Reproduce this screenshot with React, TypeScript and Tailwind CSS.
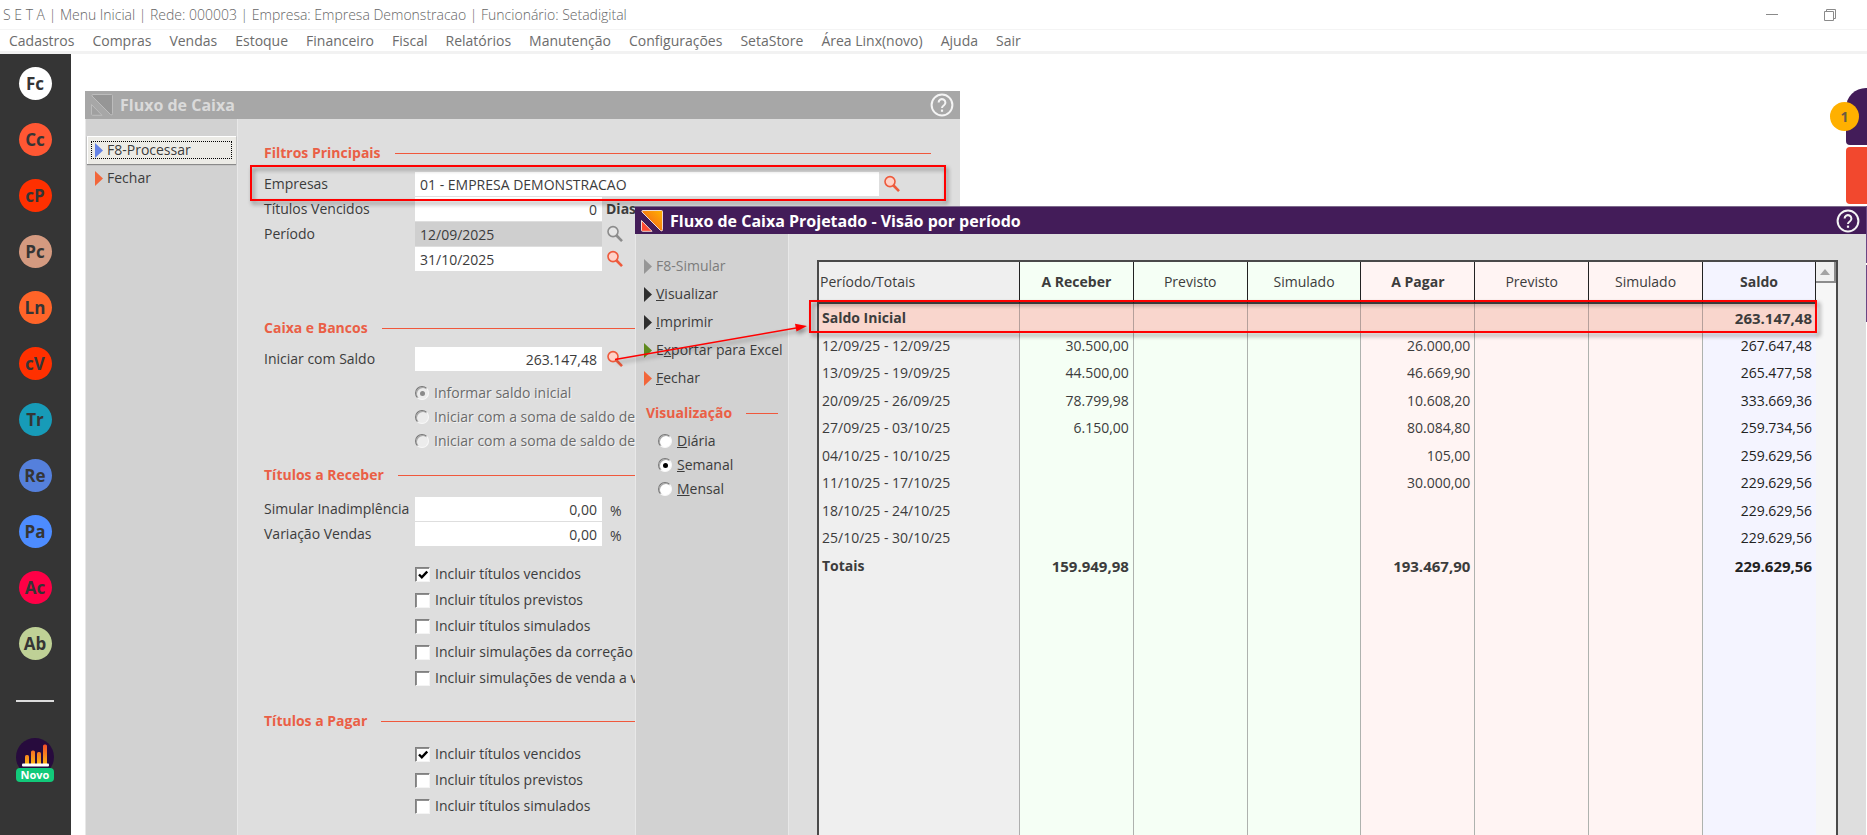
import { useState } from "react";
import type { ReactNode } from "react";

const MENU = [
  "Cadastros",
  "Compras",
  "Vendas",
  "Estoque",
  "Financeiro",
  "Fiscal",
  "Relatórios",
  "Manutenção",
  "Configurações",
  "SetaStore",
  "Área Linx(novo)",
  "Ajuda",
  "Sair",
];

const SHORTCUTS = [
  { label: "Fc", color: "bg-white" },
  { label: "Cc", color: "bg-[#ff5733]" },
  { label: "cP", color: "bg-[#ff3000]" },
  { label: "Pc", color: "bg-[#d49a80]" },
  { label: "Ln", color: "bg-[#ff6428]" },
  { label: "cV", color: "bg-[#ff3000]" },
  { label: "Tr", color: "bg-[#179bb8]" },
  { label: "Re", color: "bg-[#5580dc]" },
  { label: "Pa", color: "bg-[#4d8cff]" },
  { label: "Ac", color: "bg-[#ff0046]" },
  { label: "Ab", color: "bg-[#bfd196]" },
];

type Row = { period: string; receber?: string; pagar?: string; saldo: string };

const ROWS: Row[] = [
  { period: "12/09/25 - 12/09/25", receber: "30.500,00", pagar: "26.000,00", saldo: "267.647,48" },
  { period: "13/09/25 - 19/09/25", receber: "44.500,00", pagar: "46.669,90", saldo: "265.477,58" },
  { period: "20/09/25 - 26/09/25", receber: "78.799,98", pagar: "10.608,20", saldo: "333.669,36" },
  { period: "27/09/25 - 03/10/25", receber: "6.150,00", pagar: "80.084,80", saldo: "259.734,56" },
  { period: "04/10/25 - 10/10/25", pagar: "105,00", saldo: "259.629,56" },
  { period: "11/10/25 - 17/10/25", pagar: "30.000,00", saldo: "229.629,56" },
  { period: "18/10/25 - 24/10/25", saldo: "229.629,56" },
  { period: "25/10/25 - 30/10/25", saldo: "229.629,56" },
];

const COLUMNS = [
  { label: "A Receber", bold: true, bg: "bg-[#f5fff5]" },
  { label: "Previsto", bold: false, bg: "bg-[#f5fff5]" },
  { label: "Simulado", bold: false, bg: "bg-[#f5fff5]" },
  { label: "A Pagar", bold: true, bg: "bg-[#fff4f3]" },
  { label: "Previsto", bold: false, bg: "bg-[#fff4f3]" },
  { label: "Simulado", bold: false, bg: "bg-[#fff4f3]" },
  { label: "Saldo", bold: true, bg: "bg-[#f4f4ff]" },
];

function Logo({ muted = false }: { muted?: boolean }) {
  return (
    <svg width="24" height="24" viewBox="0 0 24 24" aria-hidden="true">
      <defs>
        <linearGradient id="logoWarm" x1="0" y1="1" x2="1" y2="0">
          <stop offset="0" stopColor="#f4511e" />
          <stop offset="1" stopColor="#ffb300" />
        </linearGradient>
      </defs>
      <path
        d="M3 1.5H21.5Q22.500 1.500 22.500 2.500V20.500Q22.500 23 20.500 21.500L2 3Q1.300 1.500 3 1.500Z"
        fill={muted ? "#969696" : "url(#logoWarm)"}
        stroke={muted ? "#bcbcbc" : "#f0d9d0"}
        strokeWidth="1"
      />
      <path
        d="M1.500 11.500L12 22.300H2.500Q1.500 22.300 1.500 21.300Z"
        fill={muted ? "#a0a0a0" : "#ff4a32"}
        stroke={muted ? "#bcbcbc" : "#f0d9d0"}
        strokeWidth="1"
      />
    </svg>
  );
}

function HelpIcon() {
  return (
    <svg width="24" height="24" viewBox="0 0 24 24" fill="none" stroke="#f4f4f4" aria-hidden="true">
      <circle cx="12" cy="12" r="10.4" strokeWidth="2" />
      <path d="M8.6 9.6a3.4 3.4 0 1 1 5.4 2.7c-1.3.9-2 1.4-2 2.7" strokeWidth="2" />
      <path d="M12 16.6v2.2" strokeWidth="2.2" />
    </svg>
  );
}

function SearchButton({ label, disabled = false }: { label: string; disabled?: boolean }) {
  const stroke = disabled ? "#8c8c8c" : "#ee5a3c";
  return (
    <button type="button" aria-label={label} disabled={disabled} className="ml-1 flex h-6 w-5 items-center">
      <svg width="18" height="18" viewBox="0 0 18 18" aria-hidden="true">
        <path d="M10.5 10.5L16 16.2" stroke={stroke} strokeWidth="2.6" />
        <circle cx="7" cy="6.6" r="5" fill={disabled ? "#e6e6e6" : "#ffd2c8"} stroke={stroke} strokeWidth="1.6" />
      </svg>
    </button>
  );
}

function WindowTitle({ title, muted = false }: { title: string; muted?: boolean }) {
  return (
    <header
      className={`flex h-7 items-center pl-[5px] pr-[6px] ${
        muted ? "bg-[#a7a7a7] text-[#dadada]" : "border-t border-[#7d6a8c] bg-[#431c59] text-white"
      }`}
    >
      <Logo muted={muted} />
      <h2 className="ml-[6px] flex-1 text-[16px] font-bold">{title}</h2>
      <button type="button" aria-label="Ajuda">
        <HelpIcon />
      </button>
    </header>
  );
}

type ActionProps = { color: string; focused?: boolean; disabled?: boolean; children: ReactNode };

function Action({ color, focused = false, disabled = false, children }: ActionProps) {
  return (
    <button
      type="button"
      disabled={disabled}
      className={`relative flex h-7 w-full items-center gap-1 whitespace-nowrap pl-2 text-left ${
        disabled ? "text-[#7c7c7c]" : ""
      } ${focused ? "bg-[#ecebe6] shadow-[inset_1px_1px_0_#fff,0_1px_1px_#8a8a8a]" : ""}`}
    >
      <svg width="8" height="15" viewBox="0 0 8 15" aria-hidden="true">
        <path d="M0 0L8 7.5L0 15Z" fill={color} />
      </svg>
      <span>{children}</span>
      {focused && <span className="absolute inset-x-1 inset-y-[5px] border border-dotted border-black" />}
    </button>
  );
}

function Heading({ children }: { children: ReactNode }) {
  return (
    <div className="flex h-5 items-center gap-[14px]">
      <h3 className="whitespace-nowrap font-bold text-[#ea5f46]">{children}</h3>
      <span className="h-px flex-1 bg-[#f0583c]" />
    </div>
  );
}

type FieldProps = {
  id: string;
  label: string;
  value: string;
  wide?: boolean;
  right?: boolean;
  disabled?: boolean;
  hideLabel?: boolean;
  children?: ReactNode;
};

function Field({ id, label, value, wide, right, disabled, hideLabel, children }: FieldProps) {
  return (
    <div className="flex h-6 items-center">
      <label htmlFor={id} className="w-[151px] shrink-0 whitespace-nowrap">
        {hideLabel ? "" : label}
      </label>
      <input
        id={id}
        aria-label={label}
        defaultValue={value}
        disabled={disabled}
        className={`h-6 px-[5px] outline-none ${wide ? "min-w-0 flex-1" : "w-[187px]"} ${right ? "text-right" : ""} ${
          disabled ? "bg-[#cfcfcf]" : "bg-white"
        }`}
      />
      {children}
    </div>
  );
}

function Check({ label, checked = false }: { label: string; checked?: boolean }) {
  return (
    <label className="flex h-[26px] items-center gap-[5px] whitespace-nowrap">
      <span className="relative h-[15px] w-[15px]">
        <input
          type="checkbox"
          defaultChecked={checked}
          className="peer block h-[15px] w-[15px] appearance-none border border-b-[#f4f4f4] border-l-[#808080] border-r-[#f4f4f4] border-t-[#808080] bg-white shadow-[inset_1px_1px_0_#909090]"
        />
        <svg
          className="pointer-events-none absolute left-[3px] top-[3px] hidden peer-checked:block"
          width="10"
          height="10"
          viewBox="0 0 10 10"
          aria-hidden="true"
        >
          <path d="M1 4.5L3.8 7.3L9.2 1.6" fill="none" stroke="#000" strokeWidth="2.4" />
        </svg>
      </span>
      {label}
    </label>
  );
}

type RadioProps = { name: string; checked?: boolean; disabled?: boolean; onChange?: () => void; children: ReactNode };

function Radio({ name, checked = false, disabled = false, onChange, children }: RadioProps) {
  return (
    <label
      className={`flex h-6 items-center gap-[5px] whitespace-nowrap ${
        disabled ? "text-[#6a6a6a] [text-shadow:1px_1px_0_#f4f4f4]" : ""
      }`}
    >
      <input
        type="radio"
        name={name}
        checked={checked}
        disabled={disabled}
        onChange={onChange ?? (() => {})}
        className="grid h-[14px] w-[14px] appearance-none place-items-center rounded-full border border-b-[#f8f8f8] border-l-[#777] border-r-[#f8f8f8] border-t-[#777] bg-white shadow-[inset_1px_1px_0_#a8a8a8] checked:before:h-[5px] checked:before:w-[5px] checked:before:rounded-full checked:before:bg-black disabled:bg-[#ececec] disabled:checked:before:bg-[#8a8a8a]"
      />
      <span>{children}</span>
    </label>
  );
}

function Sidebar() {
  return (
    <aside className="flex w-[71px] shrink-0 flex-col items-center bg-[#353535] pr-px pt-[13px]">
      <div className="flex flex-col gap-[23px]">
        {SHORTCUTS.map((s) => (
          <button
            key={s.label}
            type="button"
            className={`flex h-[33px] w-[33px] items-center justify-center rounded-full text-[17px] font-bold text-[#353535] ${s.color}`}
          >
            {s.label}
          </button>
        ))}
      </div>
      <span className="mt-10 h-[2px] w-[38px] bg-[#dcdcdc]" />
      <button type="button" className="relative mt-[36px] flex w-[38px] flex-col items-center">
        <svg width="38" height="38" viewBox="0 0 38 38" aria-hidden="true">
          <defs>
            <linearGradient id="bars" x1="0" y1="7" x2="0" y2="27" gradientUnits="userSpaceOnUse">
              <stop offset="0" stopColor="#f4502a" />
              <stop offset="1" stopColor="#fdb913" />
            </linearGradient>
          </defs>
          <circle cx="19" cy="19" r="19" fill="#270b3d" />
          <g fill="url(#bars)">
            <rect x="9" y="17" width="4" height="10" rx="1.5" />
            <rect x="15" y="12.500" width="4" height="14.500" rx="1.5" />
            <rect x="21" y="14" width="4" height="13" rx="1.5" />
            <rect x="27" y="6.500" width="4" height="20.500" rx="1.500" />
          </g>
          <rect x="6" y="25.500" width="27" height="3" rx="1" fill="#fff" />
        </svg>
        <span className="-mt-2 w-full rounded bg-[#12c97a] text-center text-[11px] font-bold leading-[14px] text-white">
          Novo
        </span>
      </button>
    </aside>
  );
}

function FluxoDeCaixa() {
  return (
    <section className="absolute bottom-0 left-[14px] top-[37px] flex w-[875px] flex-col bg-[#dedede]">
      <WindowTitle title="Fluxo de Caixa" muted />
      <div className="flex flex-1">
        <div className="w-[153px] shrink-0 border-x border-[#e8e8e8] bg-[#d2d2d2] pl-px pr-px pt-[17px]">
          <Action color="#6482e6" focused>
            F8-Processar
          </Action>
          <Action color="#f2663a">Fechar</Action>
        </div>
        <form className="flex-1 pl-[26px] pr-[29px] pt-6">
          <Heading>Filtros Principais</Heading>
          <div className="mt-[9px] flex flex-col gap-px">
            <div className="relative pr-7">
              <Field id="empresas" label="Empresas" value="01 - EMPRESA DEMONSTRACAO" wide>
                <SearchButton label="Buscar empresa" />
              </Field>
              <span className="pointer-events-none absolute -bottom-[5px] -left-[14px] -right-[15px] -top-[7px] border-2 border-[#ff0000] drop-shadow-[2px_3px_2px_rgba(0,0,0,0.45)]" />
            </div>
            <Field id="vencidos" label="Títulos Vencidos" value="0" right>
              <span className="ml-1 font-bold">Dias</span>
            </Field>
            <Field id="inicio" label="Período" value="12/09/2025" disabled>
              <SearchButton label="Escolher data inicial" disabled />
            </Field>
            <Field id="fim" label="Data final" value="31/10/2025" hideLabel>
              <SearchButton label="Escolher data final" />
            </Field>
          </div>

          <div className="mt-[47px]">
            <Heading>Caixa e Bancos</Heading>
          </div>
          <div className="mt-[9px]">
            <Field id="saldo" label="Iniciar com Saldo" value="263.147,48" right>
              <SearchButton label="Buscar saldo" />
            </Field>
          </div>
          <div className="mt-[10px] pl-[151px]">
            <Radio name="origem" checked disabled>
              Informar saldo inicial
            </Radio>
            <Radio name="origem" disabled>
              Iniciar com a soma de saldo de
            </Radio>
            <Radio name="origem" disabled>
              Iniciar com a soma de saldo de
            </Radio>
          </div>

          <div className="mt-3">
            <Heading>Títulos a Receber</Heading>
          </div>
          <div className="mt-3 flex flex-col gap-px">
            <Field id="inadimplencia" label="Simular Inadimplência" value="0,00" right>
              <span className="ml-2 self-end">%</span>
            </Field>
            <Field id="variacao" label="Variação Vendas" value="0,00" right>
              <span className="ml-2 self-end">%</span>
            </Field>
          </div>
          <div className="mt-[15px] pl-[151px]">
            <Check label="Incluir títulos vencidos" checked />
            <Check label="Incluir títulos previstos" />
            <Check label="Incluir títulos simulados" />
            <Check label="Incluir simulações da correção" />
            <Check label="Incluir simulações de venda a v" />
          </div>

          <div className="mt-5">
            <Heading>Títulos a Pagar</Heading>
          </div>
          <div className="mt-[10px] pl-[151px]">
            <Check label="Incluir títulos vencidos" checked />
            <Check label="Incluir títulos previstos" />
            <Check label="Incluir títulos simulados" />
          </div>
        </form>
      </div>
    </section>
  );
}

function ProjectionTable() {
  const cell = "border-r border-[#aeb2ae] pr-1 text-right last:border-r-0 last:text-[#222]";
  return (
    <table className="h-full w-full table-fixed border-separate border-spacing-0">
      <thead>
        <tr className="h-[42px]">
          <th className="w-[201px] border-b-2 border-r border-b-[#444] border-r-[#222] bg-[#efefef] pl-px text-left font-normal">
            Período/Totais
          </th>
          {COLUMNS.map((c, i) => (
            <th
              key={i}
              className={`border-b-2 border-r border-b-[#444] border-r-[#222] last:w-[113px] ${c.bg} ${
                c.bold ? "font-bold" : "font-normal"
              }`}
            >
              {c.label}
            </th>
          ))}
        </tr>
      </thead>
      <tbody>
        <tr className="h-7 bg-[#f9d6cd] font-bold">
          <td className="border-r border-[#b5a09b] pl-[3px]">Saldo Inicial</td>
          {COLUMNS.map((_, i) => (
            <td key={i} className="border-r border-[#b5a09b] pr-1 text-right text-[15px] last:border-r-0">
              {i === 6 ? "263.147,48" : ""}
            </td>
          ))}
        </tr>
        {ROWS.map((r) => (
          <tr key={r.period} className="odd:h-7 even:h-[27px]">
            <td className="border-r border-[#aeaeae] bg-[#efefef] pl-[3px]">{r.period}</td>
            {[r.receber, "", "", r.pagar, "", "", r.saldo].map((v, i) => (
              <td key={i} className={`${cell} ${COLUMNS[i].bg}`}>
                {v}
              </td>
            ))}
          </tr>
        ))}
        <tr className="h-[27px] font-bold">
          <td className="border-r border-[#aeaeae] bg-[#efefef] pl-[3px]">Totais</td>
          {["159.949,98", "", "", "193.467,90", "", "", "229.629,56"].map((v, i) => (
            <td key={i} className={`${cell} text-[15px] ${COLUMNS[i].bg}`}>
              {v}
            </td>
          ))}
        </tr>
        {/* empty space below the totals keeps the column colours */}
        <tr className="h-auto">
          <td className="border-r border-[#aeaeae] bg-[#efefef]" />
          {COLUMNS.map((c, i) => (
            <td key={i} className={`${cell} ${c.bg}`} />
          ))}
        </tr>
      </tbody>
    </table>
  );
}

function VisaoPorPeriodo() {
  const [view, setView] = useState("semanal");

  return (
    <section className="absolute bottom-0 left-[564px] right-px top-[152px] flex flex-col bg-[#dedede]">
      <WindowTitle title="Fluxo de Caixa Projetado - Visão por período" />
      <div className="flex flex-1">
        <div className="w-[154px] shrink-0 border-x border-[#e8e8e8] bg-[#d2d2d2] pt-[18px]">
          <Action color="#969696" disabled>
            F8-Simular
          </Action>
          <Action color="#2e2e2e">
            <u>V</u>isualizar
          </Action>
          <Action color="#2e2e2e">
            <u>I</u>mprimir
          </Action>
          <Action color="#5f8a1e">
            E<u>x</u>portar para Excel
          </Action>
          <Action color="#f2663a">
            <u>F</u>echar
          </Action>
          <div className="mt-[11px] pl-[10px] pr-[10px]">
            <Heading>Visualização</Heading>
          </div>
          <div className="mt-[6px] pl-[22px]">
            <Radio name="visualizacao" checked={view === "diaria"} onChange={() => setView("diaria")}>
              <u>D</u>iária
            </Radio>
            <Radio name="visualizacao" checked={view === "semanal"} onChange={() => setView("semanal")}>
              <u>S</u>emanal
            </Radio>
            <Radio name="visualizacao" checked={view === "mensal"} onChange={() => setView("mensal")}>
              <u>M</u>ensal
            </Radio>
          </div>
        </div>
        <div className="flex flex-1 pl-7 pr-7 pt-[26px]">
          <div className="relative flex flex-1 border-l-2 border-r-2 border-t-2 border-[#4a4a4a] bg-[#f7f7f7]">
            <div className="flex-1">
              <ProjectionTable />
            </div>
            <div className="w-5 bg-[#f6f6f6]">
              <button
                type="button"
                aria-label="Rolar para cima"
                className="flex h-[21px] w-5 items-center justify-center border-b-2 border-r-2 border-[#8c8c8c] bg-[#f0f0f0]"
              >
                <svg width="10" height="6" viewBox="0 0 10 6" aria-hidden="true">
                  <path d="M0 6L5 0L10 6Z" fill="#a3a3a3" />
                </svg>
              </button>
            </div>
            <span className="pointer-events-none absolute -left-[10px] right-[19px] top-[38px] h-[33px] border-2 border-[#ff0000] drop-shadow-[3px_3px_2px_rgba(0,0,0,0.45)]" />
          </div>
        </div>
      </div>
    </section>
  );
}

function SideTabs() {
  return (
    <div className="absolute right-0 top-[34px] flex w-[21px] flex-col gap-[2px]">
      <div className="relative h-[57px] rounded-bl rounded-tl-[20px] bg-[#431c59]">
        <span className="absolute -left-4 top-[14px] flex h-[29px] w-[29px] items-center justify-center rounded-full bg-[#ffb000] font-bold text-[#6b5a40]">
          1
        </span>
      </div>
      <div className="h-[57px] rounded-l bg-[#f2482e]" />
      <div className="h-[57px] bg-[#6a4684]" />
      <div className="h-[57px] bg-[#6a4684]" />
    </div>
  );
}

export default function App() {
  return (
    <div className="flex h-screen flex-col overflow-hidden bg-white font-['Open_Sans','Noto_Sans',sans-serif] text-[14px] leading-5 text-[#3c3c3c]">
      <header className="flex h-[30px] shrink-0 items-center justify-between border-b border-[#f4f4f4] pl-[3px] pr-2">
        <h1 className="text-[14px] font-light text-[#666]">
          S E T A | Menu Inicial | Rede: 000003 | Empresa: Empresa Demonstracao | Funcionário: Setadigital
        </h1>
        <div className="flex">
          <button type="button" aria-label="Minimizar" className="flex w-[58px] justify-center">
            <svg width="12" height="12" viewBox="0 0 12 12" stroke="#8a8a8a" aria-hidden="true">
              <path d="M0 5.5H12" />
            </svg>
          </button>
          <button type="button" aria-label="Restaurar" className="flex w-[58px] justify-center">
            <svg width="12" height="12" viewBox="0 0 12 12" fill="none" stroke="#8a8a8a" aria-hidden="true">
              <path d="M.5 2.500H9.500V11.500H.5ZM2.500 2.500V.5H11.500V9.500H9.500" />
            </svg>
          </button>
        </div>
      </header>
      <nav className="flex h-6 shrink-0 items-center gap-[18px] border-b-[3px] border-[#f2f2f2] pl-[9px] text-[#6c6c6c]">
        {MENU.map((item) => (
          <a key={item} href="#" className="whitespace-nowrap">
            {item}
          </a>
        ))}
      </nav>
      <main className="flex min-h-0 flex-1">
        <Sidebar />
        <div className="relative flex-1 overflow-hidden">
          <SideTabs />
          <FluxoDeCaixa />
          <VisaoPorPeriodo />
          <svg
            className="pointer-events-none absolute left-[540px] top-[264px] drop-shadow-[2px_3px_2px_rgba(0,0,0,0.4)]"
            width="200"
            height="48"
            viewBox="0 0 200 48"
            aria-hidden="true"
          >
            <path d="M4 41.500L188 9.500" stroke="#ff0000" strokeWidth="1.600" />
            <path d="M196 8L184 5.800L185.500 13.500Z" fill="#ff0000" />
          </svg>
        </div>
      </main>
    </div>
  );
}
